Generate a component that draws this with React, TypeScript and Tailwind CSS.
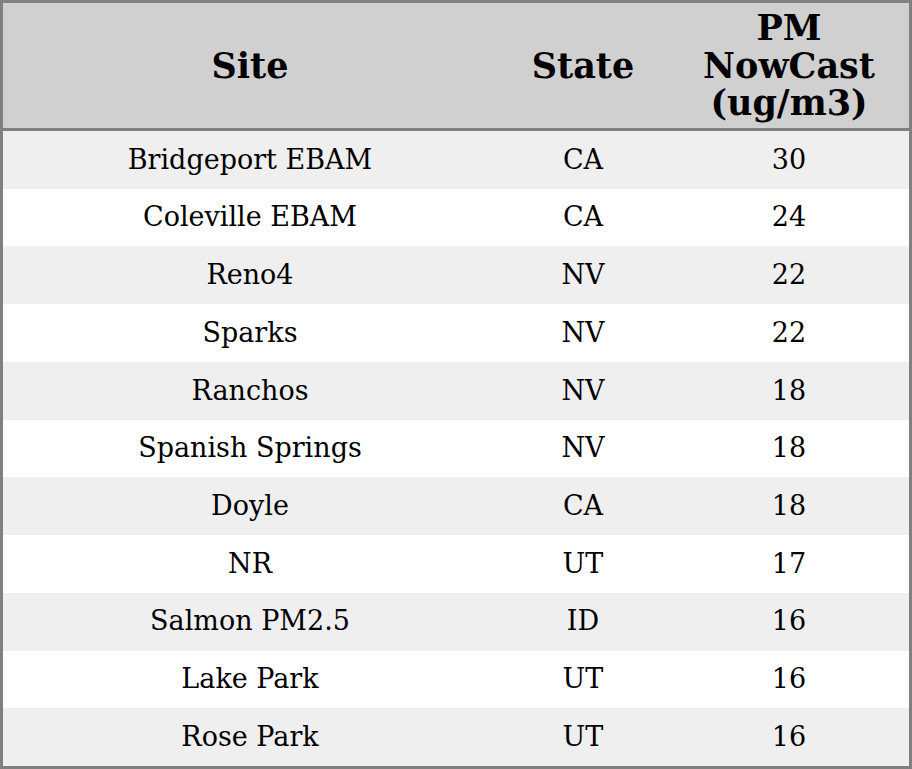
import * as React from 'react';

const rows: [string, string, number][] = [
  ['Bridgeport EBAM', 'CA', 30],
  ['Coleville EBAM', 'CA', 24],
  ['Reno4', 'NV', 22],
  ['Sparks', 'NV', 22],
  ['Ranchos', 'NV', 18],
  ['Spanish Springs', 'NV', 18],
  ['Doyle', 'CA', 18],
  ['NR', 'UT', 17],
  ['Salmon PM2.5', 'ID', 16],
  ['Lake Park', 'UT', 16],
  ['Rose Park', 'UT', 16],
];

const App: React.FC = () => {
  return (
    <div className="w-[912px] h-[769px] bg-white">
      <div
        className="w-full h-full border-[3px] border-[#808080] flex flex-col text-black"
        style={{ fontFamily: '"DejaVu Serif", serif' }}
      >
        <div className="h-[128px] shrink-0 bg-[#d0d0d0] border-b-[3px] border-[#808080] flex items-center text-[35px] font-bold leading-[37.5px]">
          <div className="w-[494px] text-center">Site</div>
          <div className="w-[172px] text-center">State</div>
          <div className="flex-1 text-center">PM<br />NowCast<br />(ug/m3)</div>
        </div>
        <div className="flex-1 flex flex-col">
          {rows.map(([site, state, pm], i) => (
            <div
              key={site}
              className={`flex-1 flex items-center text-[27px] ${i % 2 === 0 ? 'bg-[#efefef]' : 'bg-white'}`}
            >
              <div className="w-[494px] text-center">{site}</div>
              <div className="w-[172px] text-center">{state}</div>
              <div className="flex-1 text-center">{pm}</div>
            </div>
          ))}
        </div>
      </div>
    </div>
  );
};

export default App;
